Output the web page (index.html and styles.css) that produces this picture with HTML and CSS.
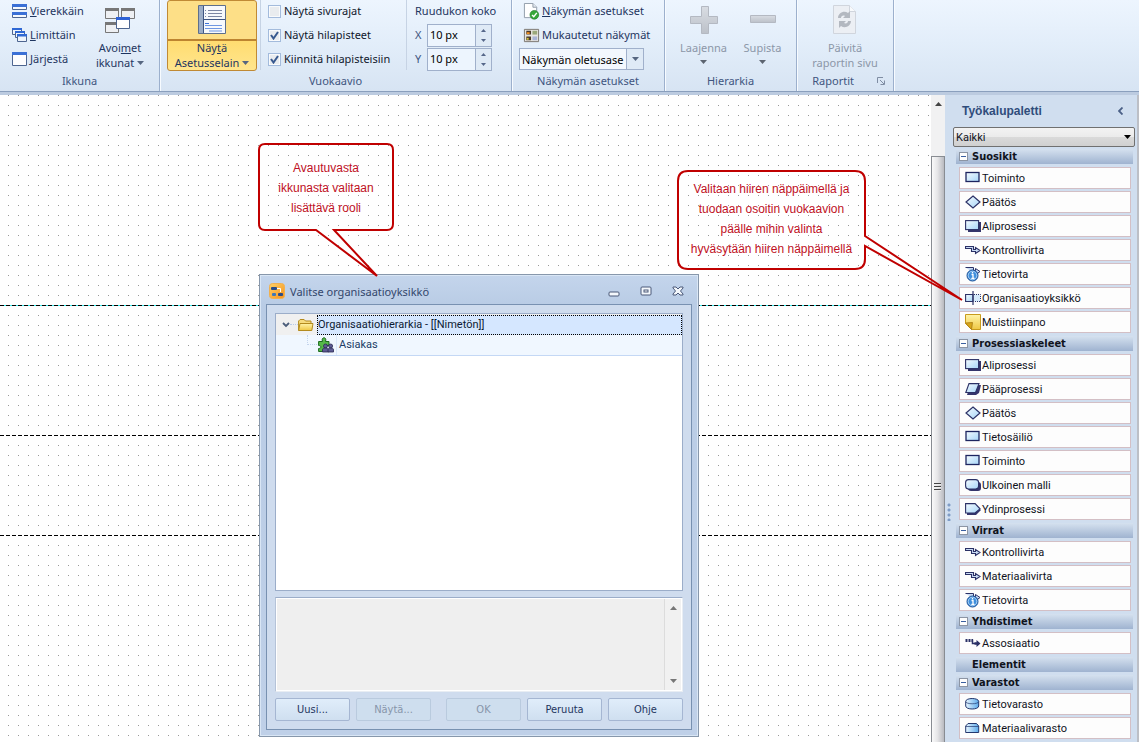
FILE: index.html
```html
<!DOCTYPE html>
<html lang="fi">
<head>
<meta charset="utf-8">
<title>Vuokaavio</title>
<link rel="stylesheet" href="styles.css">
</head>
<body>
<svg class="defs" aria-hidden="true">
  <defs>
    <linearGradient id="sky" x1="0" y1="0" x2="1" y2="1"><stop offset="0" stop-color="#f4fbff"/><stop offset="1" stop-color="#a6d5f8"/></linearGradient>
    <linearGradient id="store" x1="0" y1="0" x2="1" y2="0"><stop offset="0" stop-color="#e8f6ff"/><stop offset="1" stop-color="#5ba9ea"/></linearGradient>
    <linearGradient id="steel" x1="0" y1="0" x2="0" y2="1"><stop offset="0" stop-color="#d9dde3"/><stop offset="1" stop-color="#bcc1c9"/></linearGradient>
    <linearGradient id="gold" x1="0" y1="0" x2="0" y2="1"><stop offset="0" stop-color="#fff4a8"/><stop offset="1" stop-color="#efc743"/></linearGradient>
    <linearGradient id="orange" x1="0" y1="0" x2="1" y2="1"><stop offset="0" stop-color="#ffd266"/><stop offset="1" stop-color="#f5921e"/></linearGradient>
    <symbol id="i-box" viewBox="0 0 16 16"><rect x="1" y="2.500" width="13" height="9" fill="url(#sky)" stroke="#1d2560" stroke-width="1.3"/></symbol>
    <symbol id="i-diamond" viewBox="0 0 16 16"><path d="M8 2 15 8 8 14 1 8Z" fill="url(#sky)" stroke="#2b3166" stroke-width="1.2"/></symbol>
    <symbol id="i-sub" viewBox="0 0 16 16"><path d="M3 4h13v10H3z" fill="#35356c"/><rect x=".6" y="2.6" width="13" height="9" fill="url(#sky)" stroke="#2b3166" stroke-width="1.1"/></symbol>
    <symbol id="i-main" viewBox="0 0 16 16"><path d="M5 4h11l-2 8-3 2H2z" fill="#35356c"/><path d="M4 2.600h10L10.500 11.500H.8Z" fill="url(#sky)" stroke="#2b3166" stroke-width="1.1"/></symbol>
    <symbol id="i-ext" viewBox="0 0 16 16"><rect x="3" y="5" width="13" height="9" rx="3" fill="#35356c"/><rect x=".6" y="2.600" width="13" height="9.500" rx="3" fill="url(#sky)" stroke="#2b3166" stroke-width="1.1"/></symbol>
    <symbol id="i-core" viewBox="0 0 16 16"><path d="M2 5h9l5 4-5 5H2z" fill="#35356c"/><path d="M.6 2.600h9.500L15 7.800 10 12H.6Z" fill="url(#sky)" stroke="#2b3166" stroke-width="1.1"/></symbol>
    <symbol id="i-flow" viewBox="0 0 16 16"><path d="M.5 4.500h8v3h2V5.500L15 8.500l-4.500 3v-2h-4v-3h-6Z" fill="#c9dcf5" stroke="#2b3166" stroke-width="1.100"/></symbol>
    <symbol id="i-info" viewBox="0 0 16 16"><path d="M.5 1.500h8v3h2V2.500L15 5.500l-4 3" fill="#c9dcf5" stroke="#2b3166"/><circle cx="7.500" cy="9.500" r="5.500" fill="#3f8fdc" stroke="#1b4f94"/><circle cx="7.500" cy="9.500" r="4.300" fill="none" stroke="#bfe0fb" stroke-width=".8"/><path d="M6.500 8.500H8v3.500M6.300 12.300h3.200M7.500 6v1.200" stroke="#fff" stroke-width="1.300" fill="none"/></symbol>
    <symbol id="i-org" viewBox="0 0 16 16"><path d="M.6 4.500H8v7H.6z" fill="url(#sky)" stroke="#2b3166" stroke-width="1.1"/><path d="M8 1v14" stroke="#2b3166" stroke-width="1.200"/><path d="M9 4.500h6.500v7H9" fill="#d5eafb" stroke="#2b3166" stroke-dasharray="1 1"/></symbol>
    <symbol id="i-note" viewBox="0 0 16 16"><path d="M.5.5h15v15H6.500L.5 9.500Z" fill="url(#gold)" stroke="#c79a1c"/><path d="M.5 9 7.500 8.500 6.500 15.500Z" fill="#d8a61c" stroke="#a87a10" stroke-width=".8"/></symbol>
    <symbol id="i-assoc" viewBox="0 0 16 16"><path d="M.5 5.500H8" stroke="#2b3166" stroke-width="3" stroke-dasharray="2 1"/><path d="M7.500 4.500v4h3" fill="none" stroke="#2b3166" stroke-width="1.500"/><path d="M9.500 7.200h2V5L15.500 8.500 11.500 12V9.800h-2Z" fill="#2b3166"/></symbol>
    <symbol id="i-cyl" viewBox="0 0 16 16"><path d="M.7 5.500c0-4 13-4 13 0v4.500c0 4-13 4-13 0Z" fill="url(#store)" stroke="#24386e"/><path d="M.7 5.500c0 3 13 3 13 0" fill="none" stroke="#24386e" stroke-width=".7"/></symbol>
    <symbol id="i-mat" viewBox="0 0 16 16"><path d="M.7 12.500V6L3 3.500h8.500L13.700 6v6.500Z" fill="url(#store)" stroke="#24386e"/><path d="M.7 6.500h13" stroke="#24386e" stroke-width=".7"/></symbol>
    <symbol id="i-win" viewBox="0 -1 16 16"><path d="M.5.5h14v13H.5z" fill="#fdfdfe" stroke="#4d6590"/><path d="M0 0h15v3H0z" fill="#3a70d6"/></symbol>
    <symbol id="i-tiles" viewBox="0 -1 16 16"><path d="M.5.5h14v5H.5zM.5 8.500h14v5H.5z" fill="#f6f9fd" stroke="#4d6590"/><path d="M0 0h15v3H0zM0 8h15v3H0z" fill="#3a70d6"/></symbol>
    <symbol id="i-cascade" viewBox="0 0 16 16"><g fill="#eef4fb" stroke="#4d6590"><path d="M.5 1.500h9v6h-9z"/><path d="M3.500 4.500h9v6h-9z"/><path d="M5.500 7.500h9v7h-9z"/></g><path d="M0 1h10v2H0zM3 4h10v2H3zM5 7h10v2.500H5z" fill="#2f68d4"/></symbol>
    <symbol id="i-open" viewBox="0 0 32 32"><g fill="#eef0f3" stroke="#777"><path d="M1.500 4.500h13v10h-13zM17.500 4.500h13v10h-13zM1.500 18.500h13v10h-13z"/></g><path d="M1 4h14v3H1zM17 4h14v3H17zM1 18h14v3H1z" fill="#777"/><path d="M12.500 13.500h13v11h-13z" fill="#fff" stroke="#4d6590"/><path d="M12 13h14v3H12z" fill="#2e62d6"/></symbol>
    <symbol id="i-book" viewBox="0 0 32 32"><path d="M2.500 1.500h27v28h-27z" fill="#f7f9fc" stroke="#5d6f8c"/><path d="M3 2h4v27H3z" fill="#9cadc6"/><path d="M7.500 2v27M7 15.500h22" stroke="#3f5682"/><path d="M9 6.500h1M9 9.500h1M9 12.500h1M12 6.500h14M12 9.500h14M12 12.500h14" stroke="#7d87a3"/><path d="M9 19.500h4" stroke="#3f74d8"/><path d="M9 21.500h17M9 24.500h17M13 27h13" stroke="#6f97e2"/></symbol>
    <symbol id="i-doc" viewBox="0 0 18 18"><path d="M1.500.5h9l4 4v11h-13z" fill="#fff" stroke="#8e9aa8"/><path d="M10.500.5v4h4" fill="#e4e9f0" stroke="#8e9aa8"/><circle cx="12" cy="12.500" r="4.600" fill="#35a83a" stroke="#1e7a28" stroke-width=".7"/><path d="m9.600 12.600 1.800 1.900 3.200-4" fill="none" stroke="#fff" stroke-width="1.500"/></symbol>
    <symbol id="i-views" viewBox="0 0 18 18"><path d="M1.500 2.500h15v13h-15z" fill="#e6e4df" stroke="#77736c"/><path d="M3.500 4h5v4h-5zM3.500 10h5v4h-5z" fill="#4b3a2b"/><path d="M10 4h5v4h-5z" fill="#9aa77a"/><path d="M10 10h5v4h-5z" fill="#a9b3d6"/><path d="M4 5.500h3v2H4z" fill="#f39020"/><path d="M4 11.500h2v2H4z" fill="#d4c73a"/></symbol>
    <symbol id="i-plus" viewBox="0 0 32 32"><path d="M13.500 2.500h7v10h9v7h-9v10h-7v-10h-11v-7h11z" fill="url(#steel)" stroke="#b4b9c2"/></symbol>
    <symbol id="i-minus" viewBox="0 0 32 32"><path d="M3.500 11.500h25v7h-25z" fill="url(#steel)" stroke="#b4b9c2"/></symbol>
    <symbol id="i-report" viewBox="0 0 32 32"><path d="M4.500 1.500h16l6 6v22h-22z" fill="#eceff4" stroke="#d0d5dd"/><path d="M20.500 1.500v6h6" fill="#f8fafc" stroke="#d0d5dd"/><path d="M9 14c0-5 6-8 10-5l2-2v7h-7l2-2c-2-1-4 0-4 2zM22 17c0 5-6 8-10 5l-2 2v-7h7l-2 2c2 1 4 0 4-2z" fill="#b3b8c0"/></symbol>
    <symbol id="i-folder" viewBox="0 0 16 16"><path d="M.6 13.500V4l1.500-1.500h4L7.500 4H13v2" fill="#f6dc7e" stroke="#b38a1c"/><path d="M.6 13.500 2 6.500h13l-1.200 7Z" fill="url(#gold)" stroke="#b38a1c"/></symbol>
    <symbol id="i-people" viewBox="0 0 16 16"><path d="M4.500 4.500c-2-5 5-5 3 0H11v4h-3v6H.6v-3c3 0 3-3 0-3v-4z" fill="#55b848" stroke="#1c6b1e"/><g fill="#5d5c93" stroke="#2a2852" stroke-width=".8"><circle cx="7.500" cy="9" r="2"/><path d="M4.500 15v-2.500c0-2 6-2 6 0V15z"/><circle cx="12.600" cy="9" r="2"/><path d="M10 15v-2.500c0-2 5.500-2 5.500 0V15z"/></g></symbol>
    <symbol id="i-app" viewBox="0 0 16 16"><rect x=".5" y=".5" width="15" height="15" rx="3" fill="url(#orange)" stroke="#f0b050"/><rect x="2" y="4" width="6" height="3" rx="1" fill="#2b4c86"/><rect x="9" y="10" width="5" height="3" rx="1" fill="#2b4c86"/><rect x="3" y="10" width="4" height="3" rx="1" fill="#3d78b8"/><path d="M8 5.500h3.500V9" fill="none" stroke="#fff"/></symbol>
    <symbol id="i-down" viewBox="0 0 7 4"><path d="M0 0h7L3.500 4Z" fill="currentColor"/></symbol>
    <symbol id="i-up" viewBox="0 0 7 4"><path d="M0 4h7L3.500 0Z" fill="currentColor"/></symbol>
  </defs>
</svg>

<div class="app">
  <header class="ribbon">
    <section class="group">
      <div class="group-body">
        <div class="rows windows">
          <button class="cmd"><svg><use href="#i-tiles"/></svg><span><u>V</u>ierekkäin</span></button>
          <button class="cmd"><svg><use href="#i-cascade"/></svg><span><u>L</u>imittäin</span></button>
          <button class="cmd"><svg><use href="#i-win"/></svg><span><u>J</u>ärjestä</span></button>
        </div>
        <button class="big open"><svg class="big-icon"><use href="#i-open"/></svg><span>Avoi<u>m</u>et</span><span>ikkunat <svg class="arrow"><use href="#i-down"/></svg></span></button>
      </div>
      <h2>Ikkuna</h2>
    </section>
    <section class="group">
      <div class="group-body">
        <button class="big selected"><svg class="big-icon"><use href="#i-book"/></svg><span>Näy<u>t</u>ä</span><span>Asetusselain <svg class="arrow"><use href="#i-down"/></svg></span></button>
        <div class="rows checks">
          <label><input type="checkbox">Näytä sivurajat</label>
          <label><input type="checkbox" checked>Näytä hilapisteet</label>
          <label><input type="checkbox" checked>Kiinnitä hilapisteisiin</label>
        </div>
        <div class="rows grid-size">
          <span>Ruudukon koko</span>
          <div class="field"><label for="gx">X</label><div class="spin"><input id="gx" type="text" value="10 px"><span class="steps"><button aria-label="X ylös"><svg><use href="#i-up"/></svg></button><button aria-label="X alas"><svg><use href="#i-down"/></svg></button></span></div></div>
          <div class="field"><label for="gy">Y</label><div class="spin"><input id="gy" type="text" value="10 px"><span class="steps"><button aria-label="Y ylös"><svg><use href="#i-up"/></svg></button><button aria-label="Y alas"><svg><use href="#i-down"/></svg></button></span></div></div>
        </div>
      </div>
      <h2>Vuokaavio</h2>
    </section>
    <section class="group">
      <div class="group-body">
        <div class="rows views">
          <button class="cmd"><svg><use href="#i-doc"/></svg><span><u>N</u>äkymän asetukset</span></button>
          <button class="cmd"><svg><use href="#i-views"/></svg><span>Mukautetut näkymät</span></button>
          <div class="combo"><select aria-label="Näkymän asetukset"><option>Näkymän oletusase</option></select><span class="combo-arrow"><svg class="arrow"><use href="#i-down"/></svg></span></div>
        </div>
      </div>
      <h2>Näkymän asetukset</h2>
    </section>
    <section class="group">
      <div class="group-body hierarchy">
        <button class="big" disabled><svg class="big-icon"><use href="#i-plus"/></svg><span>Laajenna</span><svg class="arrow"><use href="#i-down"/></svg></button>
        <button class="big" disabled><svg class="big-icon"><use href="#i-minus"/></svg><span>Supista</span><svg class="arrow"><use href="#i-down"/></svg></button>
      </div>
      <h2>Hierarkia</h2>
    </section>
    <section class="group">
      <div class="group-body reports">
        <button class="big" disabled><svg class="big-icon"><use href="#i-report"/></svg><span>Päivitä</span><span>raportin sivu</span></button>
      </div>
      <h2 class="with-launcher">Raportit <button class="launcher" aria-label="Raportit"><svg viewBox="0 0 8 8"><path d="M.5 6V.5H6M3 3l4 4M7.500 3.500v4h-4" fill="none" stroke="#7f8da3"/></svg></button></h2>
    </section>
  </header>

  <main class="workspace">
    <div class="canvas">
      <i class="lane lane-1"></i><i class="lane lane-2"></i><i class="lane lane-3"></i>
    </div>
    <div class="scrollbar">
      <svg class="scroll-up"><use href="#i-up"/></svg>
      <div class="thumb"><span class="grip"></span></div>
    </div>
    <aside class="palette">
      <span class="splitter"></span>
      <div class="palette-body">
        <div class="palette-title"><h1>Työkalupaletti</h1><button aria-label="Piilota"><svg viewBox="0 0 5 8"><path d="M4.500 .5 1 4l3.500 3.500" fill="none" stroke="#4a5f86" stroke-width="1.800"/></svg></button></div>
        <div class="filter"><select aria-label="Suodatin"><option>Kaikki</option></select><svg class="arrow"><use href="#i-down"/></svg></div>
        <section>
          <h3><button class="fold" aria-label="Suosikit"></button>Suosikit</h3>
          <ul>
            <li><button><svg><use href="#i-box"/></svg>Toiminto</button></li>
            <li><button><svg><use href="#i-diamond"/></svg>Päätös</button></li>
            <li><button><svg><use href="#i-sub"/></svg>Aliprosessi</button></li>
            <li><button><svg><use href="#i-flow"/></svg>Kontrollivirta</button></li>
            <li><button><svg><use href="#i-info"/></svg>Tietovirta</button></li>
            <li><button><svg><use href="#i-org"/></svg>Organisaatioyksikkö</button></li>
            <li><button><svg><use href="#i-note"/></svg>Muistiinpano</button></li>
          </ul>
        </section>
        <section>
          <h3><button class="fold" aria-label="Prosessiaskeleet"></button>Prosessiaskeleet</h3>
          <ul>
            <li><button><svg><use href="#i-sub"/></svg>Aliprosessi</button></li>
            <li><button><svg><use href="#i-main"/></svg>Pääprosessi</button></li>
            <li><button><svg><use href="#i-diamond"/></svg>Päätös</button></li>
            <li><button><svg><use href="#i-box"/></svg>Tietosäiliö</button></li>
            <li><button><svg><use href="#i-box"/></svg>Toiminto</button></li>
            <li><button><svg><use href="#i-ext"/></svg>Ulkoinen malli</button></li>
            <li><button><svg><use href="#i-core"/></svg>Ydinprosessi</button></li>
          </ul>
        </section>
        <section>
          <h3><button class="fold" aria-label="Virrat"></button>Virrat</h3>
          <ul>
            <li><button><svg><use href="#i-flow"/></svg>Kontrollivirta</button></li>
            <li><button><svg><use href="#i-flow"/></svg>Materiaalivirta</button></li>
            <li><button><svg><use href="#i-info"/></svg>Tietovirta</button></li>
          </ul>
        </section>
        <section>
          <h3><button class="fold" aria-label="Yhdistimet"></button>Yhdistimet</h3>
          <ul>
            <li><button><svg><use href="#i-assoc"/></svg>Assosiaatio</button></li>
          </ul>
        </section>
        <section>
          <h3 class="empty">Elementit</h3>
        </section>
        <section>
          <h3><button class="fold" aria-label="Varastot"></button>Varastot</h3>
          <ul>
            <li><button><svg><use href="#i-cyl"/></svg>Tietovarasto</button></li>
            <li><button><svg><use href="#i-mat"/></svg>Materiaalivarasto</button></li>
          </ul>
        </section>
      </div>
    </aside>

    <div class="dialog" role="dialog" aria-labelledby="dlg-title">
      <div class="titlebar">
        <svg class="app-icon"><use href="#i-app"/></svg>
        <h2 id="dlg-title">Valitse organisaatioyksikkö</h2>
        <button aria-label="Pienennä"><svg viewBox="0 0 12 12"><rect x="1" y="7" width="10" height="4" rx="1" fill="#f4f8fc" stroke="#4a5878"/></svg></button>
        <button aria-label="Suurenna"><svg viewBox="0 0 12 12"><rect x="1" y="2" width="10" height="8" rx="1" fill="#f4f8fc" stroke="#4a5878"/><rect x="4" y="5" width="4" height="2" fill="#fff" stroke="#4a5878"/></svg></button>
        <button aria-label="Sulje"><svg viewBox="0 0 12 12"><path d="M1 2h3l2 2 2-2h3v1L8.500 6 11 9v1H8L6 8l-2 2H1V9l2.500-3L1 3z" fill="#f4f8fc" stroke="#4a5878"/></svg></button>
      </div>
      <div class="dialog-body">
        <div class="tree" role="tree">
          <div class="tree-row root" role="treeitem"><svg class="chevron" viewBox="0 0 8 6"><path d="m1 1 3 3 3-3" fill="none" stroke="#4b5d7a" stroke-width="1.800"/></svg><i class="link"></i><svg class="node"><use href="#i-folder"/></svg><span>Organisaatiohierarkia - [[Nimetön]]</span></div>
          <div class="tree-row child" role="treeitem"><i class="elbow"></i><svg class="node"><use href="#i-people"/></svg><span>Asiakas</span></div>
        </div>
        <div class="memo"><textarea aria-label="Kuvaus" readonly></textarea><div class="memo-bar"><svg><use href="#i-up"/></svg><svg><use href="#i-down"/></svg></div></div>
        <div class="actions">
          <button>Uusi...</button><button disabled>Näytä...</button>
          <button class="ok" disabled>OK</button><button>Peruuta</button><button>Ohje</button>
        </div>
      </div>
    </div>

    <div class="callout callout-role">
      <svg viewBox="0 0 136 136"><path d="M7 1H129Q135 1 135 7V81Q135 87 129 87H76L119 133 58 87H7Q1 87 1 81V7Q1 1 7 1Z"/></svg>
      <p>Avautuvasta<br>ikkunasta valitaan<br>lisättävä rooli</p>
    </div>
    <div class="callout callout-pick">
      <svg viewBox="0 0 288 134"><path d="M11 1H178Q188 1 188 11V66L285 130 188 76V89Q188 99 178 99H11Q1 99 1 89V11Q1 1 11 1Z"/></svg>
      <p>Valitaan hiiren näppäimellä ja<br>tuodaan osoitin vuokaavion<br>päälle mihin valinta<br>hyväsytään hiiren näppäimellä</p>
    </div>
  </main>
</div>
</body>
</html>
```

FILE: styles.css
```css
* { box-sizing: border-box; }
body { margin: 0; font: 11px/15px "Noto Sans", "Open Sans", sans-serif; color: #1e3560; }
button, input, select, textarea { font: inherit; color: inherit; margin: 0; }
button { border: 0; padding: 0; background: none; }
h1, h2, h3, p, ul { margin: 0; padding: 0; font-weight: normal; list-style: none; }
svg { display: block; flex: none; }
.defs { position: absolute; width: 0; height: 0; }
.app { display: flex; flex-direction: column; height: 100vh; overflow: hidden; }

/* Ribbon */
.ribbon { display: flex; flex: none; background: linear-gradient(#edf5fe, #e3eefa 45%, #d7e4f3); border-bottom: 1px solid #8a9fbd; box-shadow: 0 3px #bccbe0; margin-bottom: 3px; height: 92px; }
.group { display: flex; flex-direction: column; border-right: 1px solid #9cb0cd; box-shadow: 1px 0 #f7fbff; }
.group-body { display: flex; height: 70px; }
.group h2 { font-size: 11px; line-height: 22px; text-align: center; color: #40557f; }
.rows { display: flex; flex-direction: column; gap: 2px; line-height: 22px; }
.rows > * { height: 22px; }
.cmd { display: flex; align-items: center; gap: 2px; white-space: nowrap; }
.cmd svg { width: 16px; height: 16px; }
.windows { padding-left: 12px; width: 92px; }
.big { display: flex; flex-direction: column; align-items: center; line-height: 15px; height: 71px; white-space: nowrap; }
.big .big-icon { width: 32px; height: 32px; margin: 4px 0; }
.big .arrow { display: inline-block; }
.big > .arrow { margin-top: 5px; }
.big:disabled { color: #8c97a8; }
.big:disabled > .arrow { color: #5c6470; }
.arrow { width: 7px; height: 4px; color: #566680; vertical-align: 2px; }
.open { width: 56px; margin-right: 11px; }
.selected { width: 90px; margin-left: 7px; border: 1px solid #c08a35; border-radius: 3px; background: linear-gradient(#fddf87 38px, #bd8430 38px, #bd8430 40px, #ffdc70 40px, #ffe58d); }
.selected .big-icon { margin: 3px 0 4px; }
.checks { margin-left: 3px; padding: 0 12px 0 7px; width: 146px; border-left: 1px solid #c6d3e4; color: #10182c; }
.checks label { display: flex; align-items: center; gap: 3px; white-space: nowrap; }
.checks input { appearance: none; flex: none; width: 13px; height: 13px; border: 1px solid #a3bbdc; background: #e9ecef; box-shadow: inset 0 0 0 1px #f8fafc; }
.checks input:checked { background: #e9ecef url("data:image/svg+xml,%3Csvg xmlns='http://www.w3.org/2000/svg' viewBox='0 0 11 11'%3E%3Cpath d='m2 5 2.500 3.500L9 2' fill='none' stroke='%2338598f' stroke-width='2'/%3E%3C/svg%3E"); }
.grid-size { border-left: 1px solid #c6d3e4; padding: 0 19px 0 8px; width: 105px; white-space: nowrap; }
.field { display: flex; gap: 4px; }
.field label { width: 8px; color: #40557f; }
.spin { display: flex; width: 66px; height: 23px; border: 1px solid #a0b0cb; background: #edf5fe; color: #000; }
.spin input { width: 47px; height: 19px; border: 0; padding: 0 2px; background: none; }
.steps { display: flex; flex-direction: column; flex: 1; border-left: 1px solid #a0b0cb; background: #dfeaf6; }
.steps button { display: grid; place-items: center; flex: 1; color: #56678a; }
.steps svg { width: 5px; height: 3px; }
.views { padding: 0 20px 0 7px; width: 152px; }
.views .cmd { margin-left: 4px; }
.views .cmd svg { width: 17px; height: 17px; }
.combo { display: flex; width: 125px; border: 1px solid #a0b0cb; background: #f3f8fe; color: #000; }
.combo select { appearance: none; flex: 1; min-width: 0; border: 0; padding: 0 0 0 2px; background: none; text-overflow: clip; }
.combo-arrow { display: grid; place-items: center; width: 17px; border-left: 1px solid #a0b0cb; background: #dfeaf6; }
.hierarchy { padding: 0 4px 0 9px; width: 131px; }
.hierarchy .big { width: 59px; }
.reports { width: 96px; justify-content: center; }
.group .with-launcher { display: flex; align-items: center; justify-content: flex-end; gap: 23px; padding-right: 8px; }
.launcher svg { width: 8px; height: 8px; }

/* Workspace */
.workspace { position: relative; display: flex; flex: 1; min-height: 0; font-family: Roboto, "DejaVu Sans Condensed", sans-serif; }
.canvas { position: relative; flex: 1; min-width: 0; background: url("data:image/svg+xml,%3Csvg xmlns='http://www.w3.org/2000/svg' width='10' height='10'%3E%3Cpath fill='%23999' d='M8 0h1v1H8z'/%3E%3C/svg%3E") #fff; }
.lane { position: absolute; left: 0; right: 0; height: 1px; background: repeating-linear-gradient(90deg, #000 0 4px, #fff 4px 6px); }
.lane-1 { top: 210px; background: repeating-linear-gradient(90deg, #000 0 4px, #3ee 4px 6px); }
.lane-2 { top: 340px; }
.lane-3 { top: 440px; }
.scrollbar { display: flex; flex-direction: column; align-items: center; width: 14px; background: #f1f1f2; color: #444; }
.scroll-up { width: 7px; height: 4px; margin: 7px 0 50px; }
.thumb { display: flex; align-items: center; flex: 1; width: 14px; padding-left: 2px; border: 1px solid #888c92; border-bottom: 0; background: linear-gradient(90deg, #fafafa, #e6e6e8 45%, #b9bac0); }
.grip { width: 7px; height: 8px; margin-top: 74px; background: repeating-linear-gradient(#444 0 1px, #eee 1px 2px, transparent 2px 3px); }

/* Palette */
.palette { display: flex; width: 194px; background: #d0deef; border-right: 2px solid #bcbfc6; color: #10131c; }
.splitter { align-self: center; width: 8px; height: 18px; margin-top: 186px; background: radial-gradient(circle at 4px 2px, #7e9cc6 1px, transparent 2px) 0 0 / 8px 5px; }
.palette-body { flex: 1; min-width: 0; }
.palette-title { display: flex; align-items: center; justify-content: space-between; height: 32px; padding: 0 14px 0 9px; }
.palette-title h1 { font: bold 12px/16px "Liberation Sans", sans-serif; color: #2f4c7b; }
.palette-title svg { width: 5px; height: 8px; }
.filter { display: flex; align-items: center; height: 20px; margin: 0 2px 2px 0; padding-right: 3px; border: 1px solid #707070; border-radius: 2px; background: linear-gradient(#f3f3f3, #ebebeb 50%, #dadada 50%, #d0d0d0); }
.filter select { appearance: none; flex: 1; border: 0; padding: 0 2px; background: none; }
.filter .arrow { color: #000; }
.palette section { margin: 0 4px 3px 3px; }
.palette h3 { display: flex; align-items: center; gap: 4px; height: 15px; padding-left: 3px; background: linear-gradient(#d5e1ef, #9fb3d0); font: bold 11px/15px "DejaVu Sans Condensed", "DejaVu Sans", sans-serif; }
.palette h3.empty { padding-left: 16px; }
.fold { width: 9px; height: 9px; border: 1px solid #8c95a4; background: linear-gradient(#3a5fa0, #3a5fa0) center / 5px 1px no-repeat #fdfdfd; }
.palette ul { display: grid; gap: 2px; padding: 3px 2px 0 3px; }
.palette li button { display: flex; align-items: center; gap: 1px; width: 100%; height: 22px; padding-left: 5px; border: 1px solid #d3bfc5; background: #fdfdfd; }
.palette li svg { width: 16px; height: 16px; }

/* Dialog */
.dialog { position: absolute; left: 259px; top: 179px; display: flex; flex-direction: column; width: 440px; height: 463px; padding: 0 6px 6px; border: 1px solid #8797ab; background: linear-gradient(#c4d5ec, #b9cce5 30px, #bfd0e8); box-shadow: inset 0 0 0 1px #d9e6f5; }
.titlebar { display: flex; align-items: center; height: 29px; padding: 3px 8px 0 3px; gap: 20px; font: 11px/15px "Noto Sans", sans-serif; color: #33466b; }
.titlebar h2 { flex: 1; margin-left: -15px; font-size: 11px; }
.titlebar svg { width: 12px; height: 12px; }
.titlebar .app-icon { width: 16px; height: 16px; }
.dialog-body { display: flex; flex-direction: column; flex: 1; padding: 8px; border: 1px solid #7891b1; background: #cfdcee; }
.tree { flex: 1; border: 1px solid #9badc9; background: #fff; }
.tree-row { display: flex; align-items: center; height: 21px; color: #203c66; }
.tree-row span { flex: 1; }
.root { padding-left: 6px; background: #f0f0f0; color: #0c1a33; }
.root span { margin-left: 3px; height: 20px; line-height: 17px; border: 1px dotted #000; background: #d5e7ff; }
.chevron { width: 8px; height: 6px; }
.link { width: 8px; border-top: 1px dotted #b8cbe8; }
.node { width: 16px; height: 16px; }
.child { padding-left: 31px; border-bottom: 1px solid #c4d8f5; background: #f0f7ff; }
.elbow { width: 10px; height: 10px; margin: 0 1px 10px 0; border: dotted #c4d4ec; border-width: 0 0 1px 1px; }
.child span { margin-left: 2px; padding-left: 2px; border-left: 1px solid #dbe8fa; line-height: 20px; }
.memo { display: flex; height: 95px; margin: 6px 0; border: 1px solid #9badc9; border-color: #9badc9 #e8edf3 #e8edf3 #b5c3d8; background: #efefef; box-shadow: inset 0 0 0 1px #fff; }
.memo textarea { flex: 1; border: 0; resize: none; background: none; outline: 0; }
.memo-bar { display: flex; flex-direction: column; align-items: center; justify-content: space-between; width: 17px; margin: 1px; padding: 7px 0; border-left: 1px solid #dcdcdc; background: #f1f1f1; color: #777; }
.memo-bar svg { width: 7px; height: 4px; }
.actions { display: flex; justify-content: space-between; gap: 6px; }
.actions button { flex: 1; height: 23px; border: 1px solid #a5b6d2; border-radius: 2px; background: linear-gradient(#e0edfa, #cfdff0); color: #1e3560; font: 11px/15px "DejaVu Sans Condensed", "DejaVu Sans", sans-serif; }
.actions button:disabled { border-color: #b9cade; background: #cedeee; color: #8795aa; }
.actions .ok { margin-left: 9px; }

/* Callouts */
.callout { position: absolute; color: #c01024; font: 12px/20px "Liberation Sans", sans-serif; text-align: center; white-space: nowrap; }
.callout svg { position: absolute; left: 0; top: 0; fill: none; stroke: #c00000; stroke-width: 2; overflow: visible; }
.callout-role { left: 258px; top: 48px; width: 136px; padding-top: 15px; }
.callout-role svg { width: 136px; height: 136px; }
.callout-pick { right: 273px; top: 75px; width: 189px; padding-top: 9px; }
.callout-pick svg { width: 288px; height: 134px; }
```
